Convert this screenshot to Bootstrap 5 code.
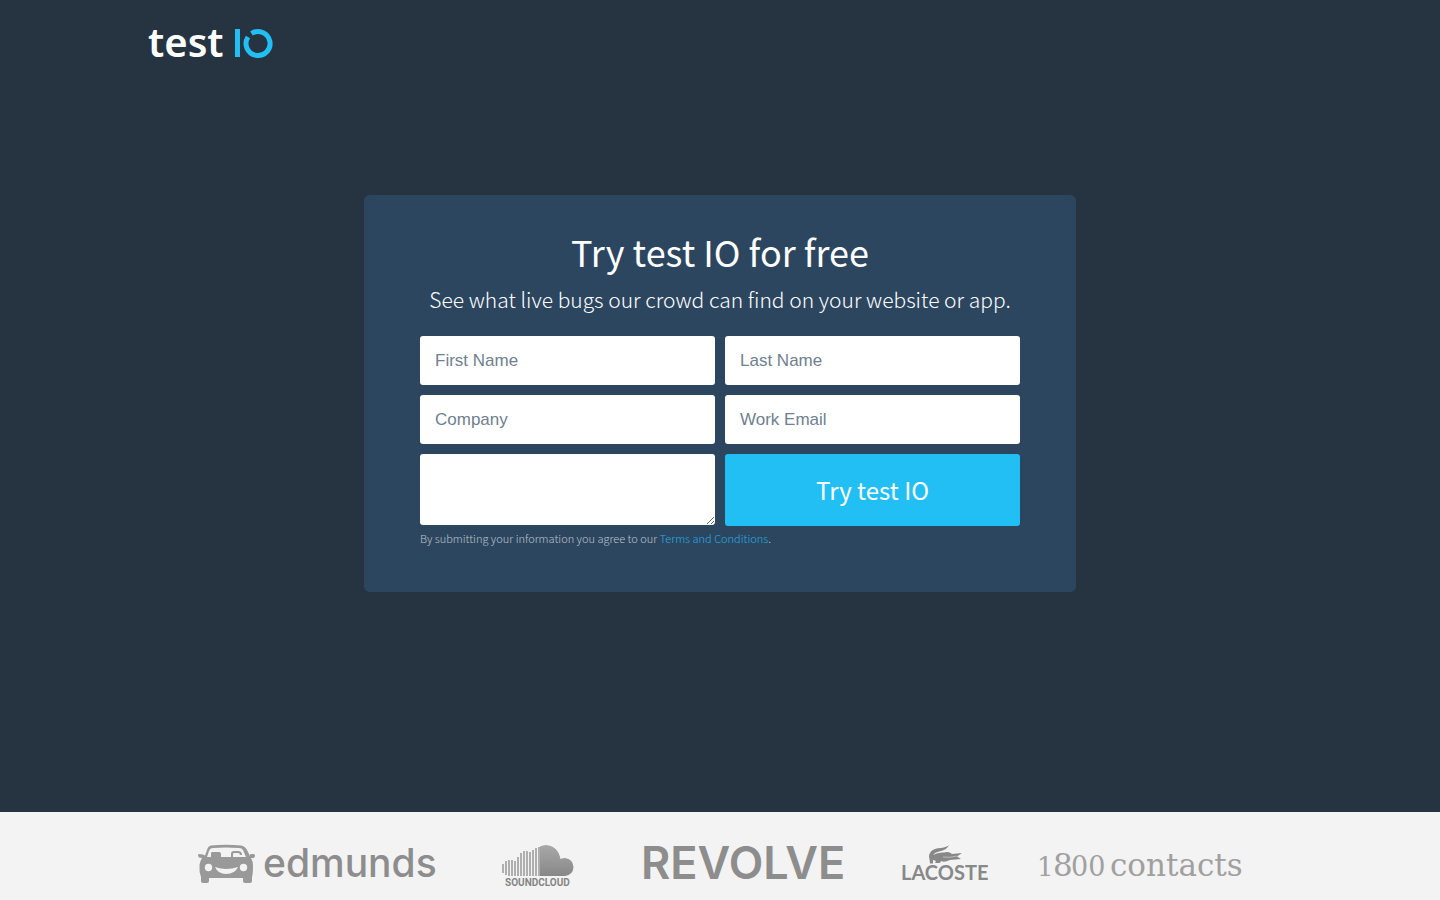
<!DOCTYPE html>
<html lang="en">
<head>
<meta charset="utf-8">
<meta name="viewport" content="width=device-width, initial-scale=1">
<title>Try test IO for free</title>
<link href="https://cdn.jsdelivr.net/npm/bootstrap@5.3.0/dist/css/bootstrap.min.css" rel="stylesheet">
<style>
  body { background: #263441; font-family: "Noto Sans CJK SC", sans-serif; }
  .brand-row { max-width: 1144px; height: 86px; }
  .hero { min-height: calc(100vh - 88px); }
  .signup { max-width: 712px; margin-top: 109px; padding: 30px 56px 42px; background: #2d465f; border-radius: 6px; }
  .signup h1 { font-size: 36px; line-height: 52px; font-weight: 400; }
  .signup .intro { font-size: 21px; line-height: 34px; font-weight: 200; padding-top: 5px; }
  .fields { display: grid; grid-template-columns: 1fr 1fr; gap: 10px; }
  .fields .form-control { height: 49px; padding: 0 15px; border: 0; border-radius: 3px; font: 17px "Liberation Sans", sans-serif; }
  .fields textarea.form-control { height: 71px; min-height: 0; }
  .fields .form-control::placeholder { color: #708090; }
  .btn-try { height: 72px; background: #22bff5; color: #fff; border: 0; border-radius: 3px; font-size: 24px; }
  .btn-try:hover { background: #16addf; color: #fff; }
  .terms { font-size: 11px; line-height: 24px; font-weight: 200; color: #bcc4cc; }
  .terms a { color: #22aee2; text-decoration: none; }
  .clients { background: #f3f3f3; height: 88px; padding-top: 28px; }
  .client-row { max-width: 1044px; display: grid; grid-template-columns: 304fr 142fr 259fr 137fr 202fr; }
  .client-row svg { display: block; overflow: visible; }
</style>
</head>
<body>
<div class="hero d-flex flex-column">
  <header class="brand-row container-fluid px-0">
    <a href="#" class="d-inline-block" aria-label="test IO">
      <svg width="130" height="86" viewBox="0 0 130 86">
        <text x="0" y="57" font-family="Noto Sans, sans-serif" font-size="40" font-weight="600" fill="#fff">test</text>
        <path d="M87 29h5v28h-5z" fill="#22bff5"/>
        <path d="M103.500 33.500A12 12 0 1 1 100 37" fill="none" stroke="#22bff5" stroke-width="5"/>
      </svg>
    </a>
  </header>
  <main class="signup container-fluid">
    <h1 class="text-white text-center mb-0">Try test IO for free</h1>
    <p class="intro text-white text-center mb-0">See what live bugs our crowd can find on your website or app.</p>
    <form class="pt-3 mt-1">
      <div class="fields">
        <input class="form-control" type="text" placeholder="First Name" aria-label="First Name">
        <input class="form-control" type="text" placeholder="Last Name" aria-label="Last Name">
        <input class="form-control" type="text" placeholder="Company" aria-label="Company">
        <input class="form-control" type="email" placeholder="Work Email" aria-label="Work Email">
        <textarea class="form-control" aria-label="Message"></textarea>
        <button class="btn btn-try" type="submit">Try test IO</button>
      </div>
      <p class="terms mb-0">By submitting your information you agree to our <a href="#">Terms and Conditions</a>.</p>
    </form>
  </main>
</div>
<footer class="clients">
  <div class="client-row container-fluid px-0">
    <svg width="243" height="50" viewBox="198 840 243 50" role="img" aria-label="edmunds">
      <path fill="#999" fill-rule="evenodd" d="M211 845.500Q226 844 241 845.500Q245 846 247 850L250 856V854.500Q250 854 252 854H254Q256 855 254 858L251 858Q253 861 253 866Q253 874 252 877V881Q252 883 250 883H245Q243 883 243 881V878H209V881Q209 883 207 883H203Q201 883 201 881V877Q199 872 199.500 865Q200 861 202 858L199 857.500Q197 855 199 854L203 854.500L205 855.500L207 850Q208 846 211 845.500ZM213 848Q210 848 209 851L207 857H211V853Q211 852 213 852H219Q221 852 221 854V857H246L243 850Q242 848 239 848Q226 847 213 848Z"/>
      <circle cx="208.500" cy="867.500" r="3.700" fill="#f3f3f3"/><circle cx="243.500" cy="867.500" r="3.700" fill="#f3f3f3"/>
      <path d="M215 867Q226 871 238 867Q235 874 226 874Q218 874 215 867Z" fill="#f3f3f3"/>
      <path d="M232 857V854Q232 852 234 852H238Q241 852 241 855" stroke="#999" stroke-width="2" fill="none"/>
      <text x="263" y="877" font-family="Inter, sans-serif" font-size="39" font-weight="500" fill="#8d8d8d">edmunds</text>
    </svg>
    <svg width="72" height="50" viewBox="502 840 72 50" role="img" aria-label="SoundCloud">
      <defs><linearGradient id="cloud" x1="0" y1="0" x2="0" y2="1"><stop offset="0" stop-color="#a8a8a8"/><stop offset="1" stop-color="#888"/></linearGradient></defs>
      <path fill="url(#cloud)" d="M540 846.500Q543 845 546 845Q558 846 560.500 859Q563 858 565 858Q573 859 573.500 867Q573 875 565 876H540Z"/>
      <path fill="none" stroke="#999" stroke-width="1.500" d="M503 864v9M506 861v14M509 860v16M512 860v16M515 861v15M518 857v19M521 853v23M524 851v25M527 851v25M530 852v24M533 850v26M536 848v28M539 847v29"/>
      <text x="505" y="886" font-family="Roboto, sans-serif" font-size="10" font-weight="700" fill="#858585">SOUNDCLOUD</text>
    </svg>
    <svg width="202" height="50" viewBox="644 840 202 50" role="img" aria-label="Revolve">
      <text x="641" y="879" font-family="Inter, sans-serif" font-size="45" font-weight="600" fill="#8d8d8d">REVOLVE</text>
    </svg>
    <svg width="86" height="50" viewBox="903 840 86 50" role="img" aria-label="Lacoste">
      <path fill="#888" d="M949 845Q947 850 939 851.500Q935 852 933 855Q938 852 944 852.500Q949 851 952 854L962 853L957 856.500L961 859L950 860Q944 863 941 861L940 863H935L936 861L933 860V863.500H930L929.500 859Q928 855 931 851.500Q934 848 941 848Q947 847 949 845Z"/>
      <path d="M943 857Q950 858 957 856" stroke="#bbb" fill="none"/>
      <text x="901" y="880" font-family="Lato, sans-serif" font-size="20" font-weight="700" fill="#888">LACOSTE</text>
    </svg>
    <svg width="202" height="50" viewBox="1040 840 202 50" role="img" aria-label="1 800 contacts">
      <g font-family="DejaVu Serif, serif" fill="#a0a0a0">
        <text x="1037" y="876" font-size="26">1</text>
        <text x="1053" y="876" font-size="31">8</text>
        <text x="1071" y="876" font-size="27">00</text>
        <text x="1110" y="876" font-size="31">contacts</text>
      </g>
    </svg>
  </div>
</footer>
<script src="https://cdn.jsdelivr.net/npm/bootstrap@5.3.0/dist/js/bootstrap.bundle.min.js"></script>
</body>
</html>
